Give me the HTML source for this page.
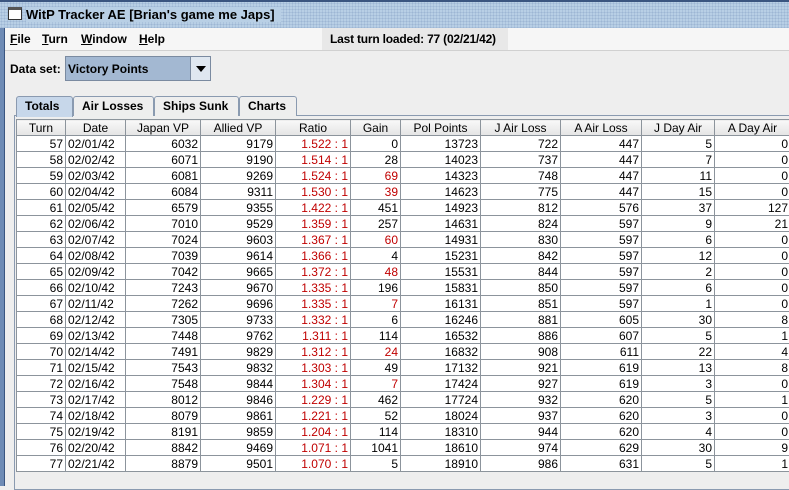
<!DOCTYPE html>
<html><head><style>
*{margin:0;padding:0;box-sizing:border-box}
body{width:789px;height:486px;overflow:hidden;background:#eeeeee;font-family:"Liberation Sans",sans-serif;font-size:12px;color:#000;position:relative}
.abs{position:absolute}
#title{left:0;top:0;width:789px;height:28px;background:#b8cfe5;border-top:2px solid #3a5580;background-image:radial-gradient(#9db6d4 1px,transparent 1px);background-size:3px 3px}
#ttext{left:26px;top:7px;font-weight:bold;font-size:13px;background:#b8cfe5;padding-right:6px}
#icon{left:8px;top:7px;width:14px;height:13px;border:1px solid #333;background:#fff;border-top:3px solid #555}
#lframe{left:0;top:28px;width:5px;height:458px;background:#6e8bb5;border-right:1px solid #3a5580}
#menu{left:5px;top:28px;width:784px;height:23px;background:#f6f6f6;border-bottom:1px solid #d0d0d0}
#menu span{position:absolute;top:4px;font-weight:bold;font-size:12px}
#last{left:322px;top:28px;width:186px;height:22px;background:#e8e8e8;font-weight:bold;padding:4px 0 0 8px;white-space:nowrap;letter-spacing:-0.2px}
#ds{left:10px;top:62px;font-weight:bold}
#combo{left:65px;top:56px;width:146px;height:25px;border:1px solid #7a8aa0;background:#a3b8d2}
#combo .t{position:absolute;left:2px;top:5px;font-weight:bold}
#combo .b{position:absolute;right:0;top:0;width:20px;height:23px;background:#dfe7f0;border-left:1px solid #7a8aa0}
#combo .b:after{content:"";position:absolute;left:5px;top:9px;border-left:5px solid transparent;border-right:5px solid transparent;border-top:6px solid #000}
.tab{position:absolute;top:96px;height:20px;border:1px solid #8a9ab0;border-bottom:none;background:#eeeeee;font-weight:bold;padding:2px 0 0 8px;border-radius:3px 3px 0 0}
#panel{left:14px;top:115px;width:780px;height:375px;border:1px solid #8a9ab0;background:#eeeeee}
table{position:absolute;left:16px;top:119px;border-collapse:collapse;table-layout:fixed;background:#fff}
td,th{border:1px solid #8c949c;height:16px;padding:0 2px;text-align:right;white-space:nowrap;overflow:hidden;font-size:12px;font-weight:normal;line-height:14px}
th{text-align:center;background:linear-gradient(#f8f8f8,#e4e4e4);height:16px}
td.d{text-align:left}
.r{color:#c00000}
</style></head><body>
<div class="abs" id="title"></div>
<div class="abs" id="icon"></div>
<div class="abs" id="ttext">WitP Tracker AE [Brian's game me Japs]</div>
<div class="abs" id="lframe"></div>
<div class="abs" id="menu"><span style="left:5px"><u>F</u>ile</span><span style="left:37px"><u>T</u>urn</span><span style="left:76px"><u>W</u>indow</span><span style="left:134px"><u>H</u>elp</span></div>
<div class="abs" id="last">Last turn loaded: 77 (02/21/42)</div>
<div class="abs" id="ds">Data set:</div>
<div class="abs" id="combo"><div class="t">Victory Points</div><div class="b"></div></div>
<div class="abs" id="panel"></div>
<div class="tab" style="left:16px;width:57px;background:#c7d7ea;height:21px">Totals</div>
<div class="tab" style="left:73px;width:81px">Air Losses</div>
<div class="tab" style="left:154px;width:85px">Ships Sunk</div>
<div class="tab" style="left:239px;width:58px">Charts</div>
<table style="width:774px">
<colgroup><col style="width:49px"><col style="width:60px"><col style="width:75px"><col style="width:75px"><col style="width:75px"><col style="width:50px"><col style="width:80px"><col style="width:80px"><col style="width:81px"><col style="width:73px"><col style="width:76px"></colgroup>
<tr><th>Turn</th><th>Date</th><th>Japan VP</th><th>Allied VP</th><th>Ratio</th><th>Gain</th><th>Pol Points</th><th>J Air Loss</th><th>A Air Loss</th><th>J Day Air</th><th>A Day Air</th></tr>
<tr><td>57</td><td class="d">02/01/42</td><td>6032</td><td>9179</td><td class="r">1.522 : 1</td><td>0</td><td>13723</td><td>722</td><td>447</td><td>5</td><td>0</td></tr>
<tr><td>58</td><td class="d">02/02/42</td><td>6071</td><td>9190</td><td class="r">1.514 : 1</td><td>28</td><td>14023</td><td>737</td><td>447</td><td>7</td><td>0</td></tr>
<tr><td>59</td><td class="d">02/03/42</td><td>6081</td><td>9269</td><td class="r">1.524 : 1</td><td class="r">69</td><td>14323</td><td>748</td><td>447</td><td>11</td><td>0</td></tr>
<tr><td>60</td><td class="d">02/04/42</td><td>6084</td><td>9311</td><td class="r">1.530 : 1</td><td class="r">39</td><td>14623</td><td>775</td><td>447</td><td>15</td><td>0</td></tr>
<tr><td>61</td><td class="d">02/05/42</td><td>6579</td><td>9355</td><td class="r">1.422 : 1</td><td>451</td><td>14923</td><td>812</td><td>576</td><td>37</td><td>127</td></tr>
<tr><td>62</td><td class="d">02/06/42</td><td>7010</td><td>9529</td><td class="r">1.359 : 1</td><td>257</td><td>14631</td><td>824</td><td>597</td><td>9</td><td>21</td></tr>
<tr><td>63</td><td class="d">02/07/42</td><td>7024</td><td>9603</td><td class="r">1.367 : 1</td><td class="r">60</td><td>14931</td><td>830</td><td>597</td><td>6</td><td>0</td></tr>
<tr><td>64</td><td class="d">02/08/42</td><td>7039</td><td>9614</td><td class="r">1.366 : 1</td><td>4</td><td>15231</td><td>842</td><td>597</td><td>12</td><td>0</td></tr>
<tr><td>65</td><td class="d">02/09/42</td><td>7042</td><td>9665</td><td class="r">1.372 : 1</td><td class="r">48</td><td>15531</td><td>844</td><td>597</td><td>2</td><td>0</td></tr>
<tr><td>66</td><td class="d">02/10/42</td><td>7243</td><td>9670</td><td class="r">1.335 : 1</td><td>196</td><td>15831</td><td>850</td><td>597</td><td>6</td><td>0</td></tr>
<tr><td>67</td><td class="d">02/11/42</td><td>7262</td><td>9696</td><td class="r">1.335 : 1</td><td class="r">7</td><td>16131</td><td>851</td><td>597</td><td>1</td><td>0</td></tr>
<tr><td>68</td><td class="d">02/12/42</td><td>7305</td><td>9733</td><td class="r">1.332 : 1</td><td>6</td><td>16246</td><td>881</td><td>605</td><td>30</td><td>8</td></tr>
<tr><td>69</td><td class="d">02/13/42</td><td>7448</td><td>9762</td><td class="r">1.311 : 1</td><td>114</td><td>16532</td><td>886</td><td>607</td><td>5</td><td>1</td></tr>
<tr><td>70</td><td class="d">02/14/42</td><td>7491</td><td>9829</td><td class="r">1.312 : 1</td><td class="r">24</td><td>16832</td><td>908</td><td>611</td><td>22</td><td>4</td></tr>
<tr><td>71</td><td class="d">02/15/42</td><td>7543</td><td>9832</td><td class="r">1.303 : 1</td><td>49</td><td>17132</td><td>921</td><td>619</td><td>13</td><td>8</td></tr>
<tr><td>72</td><td class="d">02/16/42</td><td>7548</td><td>9844</td><td class="r">1.304 : 1</td><td class="r">7</td><td>17424</td><td>927</td><td>619</td><td>3</td><td>0</td></tr>
<tr><td>73</td><td class="d">02/17/42</td><td>8012</td><td>9846</td><td class="r">1.229 : 1</td><td>462</td><td>17724</td><td>932</td><td>620</td><td>5</td><td>1</td></tr>
<tr><td>74</td><td class="d">02/18/42</td><td>8079</td><td>9861</td><td class="r">1.221 : 1</td><td>52</td><td>18024</td><td>937</td><td>620</td><td>3</td><td>0</td></tr>
<tr><td>75</td><td class="d">02/19/42</td><td>8191</td><td>9859</td><td class="r">1.204 : 1</td><td>114</td><td>18310</td><td>944</td><td>620</td><td>4</td><td>0</td></tr>
<tr><td>76</td><td class="d">02/20/42</td><td>8842</td><td>9469</td><td class="r">1.071 : 1</td><td>1041</td><td>18610</td><td>974</td><td>629</td><td>30</td><td>9</td></tr>
<tr><td>77</td><td class="d">02/21/42</td><td>8879</td><td>9501</td><td class="r">1.070 : 1</td><td>5</td><td>18910</td><td>986</td><td>631</td><td>5</td><td>1</td></tr>
</table>
</body></html>
